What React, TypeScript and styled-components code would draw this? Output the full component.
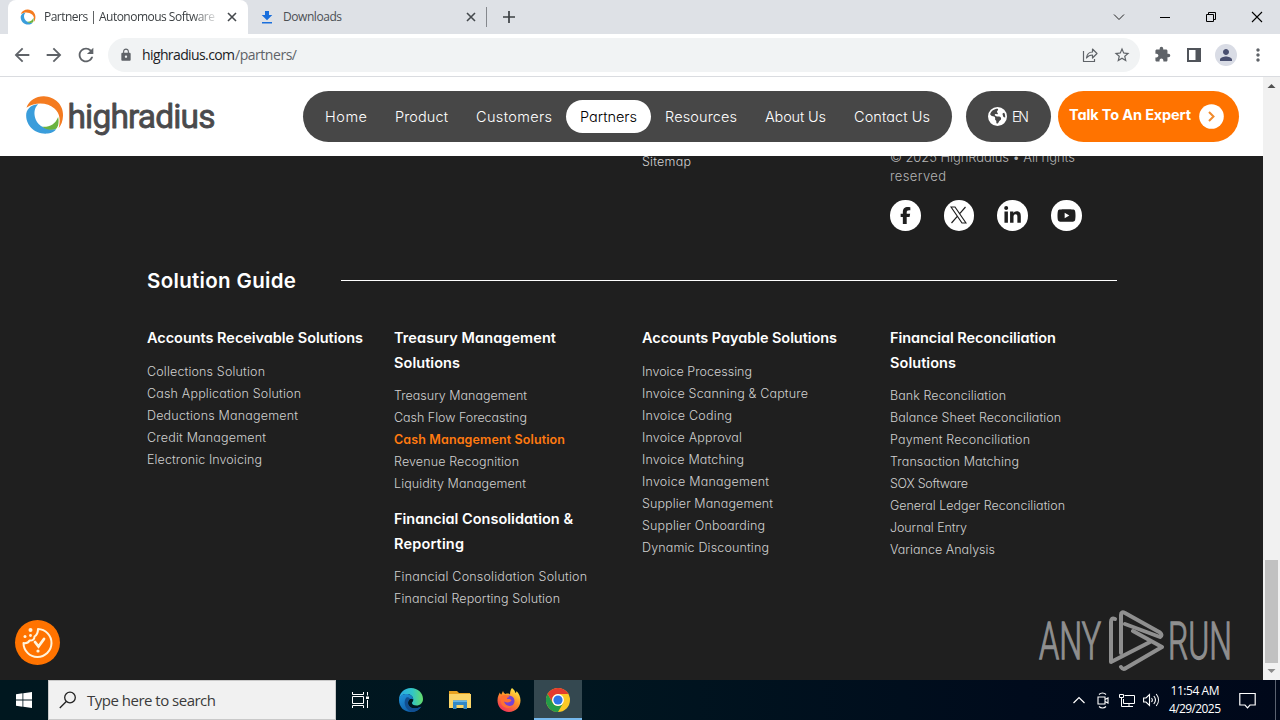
import React, { useLayoutEffect, useRef } from 'react';
import styled, { createGlobalStyle } from 'styled-components';
import { FaEarthAmericas, FaFacebookF, FaLinkedinIn, FaYoutube } from 'react-icons/fa6';
import {
  MdArrowBack,
  MdArrowForward,
  MdExtension,
  MdLock,
  MdMoreVert,
  MdPerson,
  MdRefresh,
  MdStarBorder,
} from 'react-icons/md';

const GlobalStyle = createGlobalStyle`
  * {
    box-sizing: border-box;
  }

  body {
    margin: 0;
    overflow: hidden;
  }

  ul {
    margin: 0;
    padding: 0;
    list-style: none;
  }

  svg {
    display: block;
    flex-shrink: 0;
  }
`;

const systemFont = `'Open Sans', 'Noto Sans', sans-serif`;
const brandFont = `Inter, 'Open Sans', sans-serif`;

const Tracked = styled.span`
  display: inline-block;
  white-space: pre;
`;

type FitProps = {
  width: number;
  children: string;
};

// spreads the letters of a label over the given width
const Fit = ({ width, children }: FitProps) => {
  const ref = useRef<HTMLSpanElement>(null);

  useLayoutEffect(() => {
    const el = ref.current;
    if (!el) return;
    el.style.letterSpacing = '0px';
    el.style.width = 'max-content';
    const natural = el.getBoundingClientRect().width;
    el.style.letterSpacing = `${(width - natural) / (children.length - 1)}px`;
    el.style.width = `${width}px`;
  }, [width, children]);

  return <Tracked ref={ref}>{children}</Tracked>;
};

const Screen = styled.div`
  width: 1280px;
  height: 720px;
  display: flex;
  flex-direction: column;
  overflow: hidden;
  font-family: ${systemFont};
  background: #fff;
`;

/* ---------- browser ---------- */

const TabStrip = styled.div`
  height: 34px;
  flex-shrink: 0;
  display: flex;
  align-items: center;
  padding-left: 8px;
  background: #dee1e6;
`;

const Tab = styled.div<{ $active?: boolean }>`
  width: ${({ $active }) => ($active ? 240 : 239)}px;
  height: 34px;
  display: flex;
  align-items: center;
  padding: 0 10px 0 ${({ $active }) => ($active ? 12 : 11)}px;
  border-radius: 8px 8px 0 0;
  font-size: 12px;
  color: ${({ $active }) => ($active ? '#3c4043' : '#4b4f54')};
  background: ${({ $active }) => ($active ? '#fff' : 'transparent')};
`;

const TabTitle = styled.div<{ $fade?: boolean }>`
  flex: 1;
  margin-left: 8px;
  overflow: hidden;
  line-height: 18px;
  mask-image: ${({ $fade }) => ($fade ? 'linear-gradient(90deg, #000 148px, transparent 176px)' : 'none')};
`;

const TabDivider = styled.div`
  width: 1px;
  height: 20px;
  margin: 0 14px 0 -1px;
  background: #85888d;
`;

const WindowButtons = styled.div`
  margin-left: auto;
  display: flex;

  > svg {
    width: 46px;
    height: 28px;
  }
`;

const Toolbar = styled.div`
  height: 43px;
  flex-shrink: 0;
  display: flex;
  align-items: center;
  padding: 0 12px 1px 11px;
  border-bottom: 1px solid #dadce0;
  color: #5f6368;
`;

const NavButtons = styled.div`
  width: 97px;
  display: flex;
  gap: 10px;
`;

const AddressBar = styled.div`
  width: 1032px;
  height: 34px;
  display: flex;
  align-items: center;
  padding: 0 9px 0 11px;
  border-radius: 17px;
  font-size: 14px;
  background: #f1f3f4;
`;

const Url = styled.div`
  display: flex;
  margin-left: 9px;
  line-height: 20px;
  color: #5f6368;

  > :first-child {
    color: #202124;
  }
`;

const AddressIcons = styled.div`
  margin-left: auto;
  display: flex;
  gap: 14px;
`;

const Extensions = styled.div`
  margin-left: auto;
  display: flex;
  align-items: center;
`;

const Avatar = styled.div`
  width: 22px;
  height: 22px;
  margin: 0 11px 0 14px;
  display: flex;
  align-items: center;
  justify-content: center;
  border-radius: 50%;
  color: #4a5070;
  background: #d9dce5;
`;

const PanelIcon = styled.svg`
  width: 14px;
  height: 14px;
  margin-left: 16px;
`;

const Viewport = styled.div`
  height: 603px;
  display: flex;
`;

const Page = styled.main`
  position: relative;
  width: 1263px;
  display: flex;
  flex-direction: column;
  font-family: ${brandFont};
  font-feature-settings: 'cv11' 1;
`;

const Scrollbar = styled.div`
  width: 17px;
  display: flex;
  flex-direction: column;
  align-items: center;
  background: #f1f1f1;
`;

const Thumb = styled.div`
  width: 13px;
  height: 103px;
  margin-top: auto;
  background: #c1c1c1;
`;

/* ---------- site header ---------- */

const SiteHeader = styled.header`
  height: 79px;
  flex-shrink: 0;
  display: flex;
  align-items: center;
  padding: 0 24px 1px 24px;
  background: #fff;
`;

const Menu = styled.nav`
  height: 51px;
  display: flex;
  align-items: center;
  margin-left: 83px;
  padding: 0 8px;
  border-radius: 26px;
  font-size: 14.5px;
  font-weight: 300;
  color: #fff;
  background: #474747;
`;

const MenuItem = styled.a<{ $active?: boolean }>`
  height: 33px;
  padding: 0 14px;
  line-height: 34px;
  border-radius: 17px;
  color: ${({ $active }) => ($active ? '#000' : '#fff')};
  background: ${({ $active }) => ($active ? '#fff' : 'transparent')};
`;

const Language = styled.div`
  width: 85px;
  height: 51px;
  display: flex;
  align-items: center;
  gap: 5px;
  margin-left: 14px;
  padding-left: 22px;
  border-radius: 26px;
  font-size: 14px;
  font-weight: 300;
  color: #fff;
  background: #474747;
`;

const TalkButton = styled.a`
  width: 181px;
  height: 51px;
  display: flex;
  align-items: center;
  gap: 8px;
  margin-left: 7px;
  padding-left: 11px;
  border-radius: 26px;
  font-size: 14.5px;
  font-weight: 700;
  color: #fff;
  background: #ff7300;

  > span {
    margin-bottom: 4px;
  }
`;

/* ---------- footer ---------- */

const Footer = styled.footer`
  flex: 1;
  overflow: hidden;
  padding-left: 147px;
  background: #1f1f1f;
`;

const Columns = styled.div`
  width: 991px;
  display: grid;
  grid-template-columns: 247px 248px 248px 248px;
`;

const LegalRow = styled(Columns)`
  height: 104px;
  margin-top: -8px;
  font-size: 13px;
  font-weight: 300;
  line-height: 19px;
  color: #b4b4b4;
`;

const Sitemap = styled.a`
  grid-column: 3;
  margin-top: 4px;
  font-size: 12.5px;
  color: #d2d2d2;
`;

const Legal = styled.div`
  display: flex;
  flex-direction: column;
`;

const Socials = styled.div`
  display: flex;
  gap: 23.2px;
  margin-top: 14px;
`;

const Social = styled.a`
  width: 30.5px;
  height: 30.5px;
  display: flex;
  align-items: center;
  justify-content: center;
  border-radius: 50%;
  color: #1f1f1f;
  background: #fff;
`;

const GuideHeading = styled.h2`
  height: 56px;
  margin: 0;
  display: flex;
  align-items: center;
  gap: 45px;
  font-size: 20.5px;
  font-weight: 600;
  color: #fff;

  &::after {
    content: '';
    width: 776px;
    height: 1px;
    background: #fff;
  }
`;

const GuideColumns = styled(Columns)`
  margin-top: 18px;
`;

const Group = styled.section`
  & + & {
    margin-top: 13px;
  }
`;

const GroupTitle = styled.h3`
  margin: 0 0 9px;
  display: flex;
  flex-direction: column;
  font-size: 14.5px;
  font-weight: 600;
  line-height: 24.5px;
  color: #fff;
`;

const GroupLink = styled.li<{ $active?: boolean }>`
  height: 22px;
  font-size: 12.5px;
  font-weight: ${({ $active }) => ($active ? 600 : 300)};
  line-height: 23px;
  color: ${({ $active }) => ($active ? '#ff7a10' : '#d0d0d0')};
`;

const CookieButton = styled.button`
  position: absolute;
  left: 15px;
  bottom: 15px;
  width: 45px;
  height: 45px;
  padding: 0;
  border: 0;
  border-radius: 50%;
  background: #ff7300;
`;

const Watermark = styled.div`
  position: absolute;
  right: 31px;
  bottom: 8px;
`;

/* ---------- taskbar ---------- */

const Taskbar = styled.div`
  height: 40px;
  display: flex;
  align-items: center;
  background: linear-gradient(90deg, #00171f 0%, #001620 45%, #000b1c 80%, #00081a 100%);
`;

const TaskButton = styled.div<{ $active?: boolean; $narrow?: boolean }>`
  width: ${({ $narrow }) => ($narrow ? 40 : 48)}px;
  height: 40px;
  display: flex;
  align-items: center;
  justify-content: center;
  border-bottom: ${({ $active }) => ($active ? '2px solid #76b9ed' : '0')};
  padding-top: ${({ $active }) => ($active ? '2px' : '0')};
  background: ${({ $active }) => ($active ? '#344850' : 'transparent')};
`;

const SearchBox = styled.div`
  width: 288px;
  height: 40px;
  display: flex;
  align-items: center;
  gap: 10px;
  padding-left: 10px;
  border: 1px solid #c9c9c9;
  font-size: 15px;
  color: #3b3b3b;
  background: #f1f1f1;
`;

const Apps = styled.div`
  display: flex;
  gap: 1px;

  > :first-child {
    margin-right: 2px;
  }
`;

const Tray = styled.div`
  margin-left: auto;
  display: flex;
  align-items: center;
  height: 40px;
`;

const TrayIcon = styled.div`
  width: 24px;
  display: flex;
  justify-content: center;
`;

const Clock = styled.div`
  width: 64px;
  display: flex;
  flex-direction: column;
  align-items: center;
  font-size: 12px;
  line-height: 18px;
  color: #fff;
`;

const DesktopEdge = styled.div`
  width: 5px;
  height: 40px;
  margin-left: 8px;
  border-left: 1px solid #5b6270;
`;

type LinkItem = [label: string, width: number, active?: boolean];

type GroupData = {
  title: LinkItem[];
  links: LinkItem[];
};

const menu: LinkItem[] = [
  ['Home', 42],
  ['Product', 53],
  ['Customers', 76],
  ['Partners', 57, true],
  ['Resources', 72],
  ['About Us', 61],
  ['Contact Us', 76],
];

const guide: GroupData[][] = [
  [
    {
      title: [['Accounts Receivable Solutions', 216]],
      links: [
        ['Collections Solution', 118],
        ['Cash Application Solution', 154],
        ['Deductions Management', 151],
        ['Credit Management', 119],
        ['Electronic Invoicing', 115],
      ],
    },
  ],
  [
    {
      title: [
        ['Treasury Management', 162],
        ['Solutions', 66],
      ],
      links: [
        ['Treasury Management', 133],
        ['Cash Flow Forecasting', 133],
        ['Cash Management Solution', 171, true],
        ['Revenue Recognition', 125],
        ['Liquidity Management', 132],
      ],
    },
    {
      title: [
        ['Financial Consolidation &', 179],
        ['Reporting', 70],
      ],
      links: [
        ['Financial Consolidation Solution', 193],
        ['Financial Reporting Solution', 166],
      ],
    },
  ],
  [
    {
      title: [['Accounts Payable Solutions', 195]],
      links: [
        ['Invoice Processing', 110],
        ['Invoice Scanning & Capture', 166],
        ['Invoice Coding', 90],
        ['Invoice Approval', 100],
        ['Invoice Matching', 102],
        ['Invoice Management', 127],
        ['Supplier Management', 131],
        ['Supplier Onboarding', 123],
        ['Dynamic Discounting', 127],
      ],
    },
  ],
  [
    {
      title: [
        ['Financial Reconciliation', 166],
        ['Solutions', 66],
      ],
      links: [
        ['Bank Reconciliation', 116],
        ['Balance Sheet Reconciliation', 171],
        ['Payment Reconciliation', 140],
        ['Transaction Matching', 129],
        ['SOX Software', 78],
        ['General Ledger Reconciliation', 175],
        ['Journal Entry', 77],
        ['Variance Analysis', 105],
      ],
    },
  ],
];

const Swirl = ({ size }: { size: number }) => (
  <svg width={size} height={size} viewBox='0 0 41 41'>
    <path d='M2 13C5 5 12 1 20 1.200C31 1.500 40 10 39.500 21C39.300 27 37.500 31 35 34C37 26 36.500 19 31 14C24 8 12 6.500 2 13Z' fill='#f47b20' />
    <path d='M14 9.500C8 10 3 13 1.800 19C.5 31 11 41 24 39.500C28 39 31 37 32.500 35C24 36 15 33 11.500 25C9.200 19 10 13 14 9.500Z' fill='#3a9ddb' />
    <path d='M18 32.500C26 33 31.500 30 34.500 22.500C35.500 27 35 32 32.500 34.700C27 36.500 22 35.500 18 32.500Z' fill='#6cb33f' />
  </svg>
);

const BrandLogo = () => (
  <svg width='196' height='50' viewBox='0 -1 196 50'>
    <svg x='0.500' y='3' width='40' height='41'>
      <Swirl size={40} />
    </svg>
    <text
      x='43.500'
      y='35.500'
      textLength='148'
      lengthAdjust='spacing'
      fontFamily='Roboto, sans-serif'
      fontSize='33.500'
      fill='#4a4a4c'
      stroke='#4a4a4c'
      strokeWidth='.8'
      strokeLinejoin='round'
    >
      highradius
    </text>
  </svg>
);

const CloseIcon = () => (
  <svg width='12' height='12' viewBox='0 0 12 12' stroke='#45494d' strokeWidth='1.600'>
    <path d='M2 2l8 8M10 2l-8 8' />
  </svg>
);

const AnyRunLogo = () => (
  <svg width='194' height='62' viewBox='0 0 194 62' fill='none'>
    <g
      fontFamily='Roboto, sans-serif'
      fontSize='51'
      fontWeight='300'
      fill='#8f8f8f'
      stroke='#8f8f8f'
      strokeWidth='1.300'
    >
      <text x='1' y='49' textLength='62' lengthAdjust='spacingAndGlyphs'>
        ANY
      </text>
      <text x='130' y='49' textLength='64' lengthAdjust='spacingAndGlyphs'>
        RUN
      </text>
    </g>
    <g stroke='#8f8f8f' strokeWidth='4' strokeLinejoin='round' strokeLinecap='round'>
      <path d='M77 9Q73 7 73 12V52L112 32' />
      <path d='M83 43V5Q83 1 87 3L122 22.500Q125 25 122 27L87 14' />
      <path d='M95 21L124 37L88 58Q85 60 83 57' />
    </g>
  </svg>
);

const CookieIcon = () => (
  <svg width='45' height='45' viewBox='0 0 45 45' fill='none' stroke='#fff4dc' strokeWidth='2'>
    <path d='M23 9a14 14 0 1 1-14.500 14c3 .5 5-.5 6-2.500 3 .5 5-1 5-4 2.500-1.500 3.500-4 3.500-7.500Z' strokeLinejoin='round' />
    <path d='M20 22l3.500 4.500 5.500-7.500' strokeWidth='2.800' strokeLinecap='round' />
    <g fill='#fff4dc' stroke='none'>
      <circle cx='15.500' cy='10' r='2' />
      <circle cx='10' cy='16.500' r='1.500' />
      <circle cx='15.500' cy='15.500' r='1.400' />
      <circle cx='23' cy='31' r='1.600' />
    </g>
  </svg>
);

const EdgeIcon = () => (
  <svg width='26' height='26' viewBox='0 0 26 26'>
    <defs>
      <linearGradient id='edgeTop' x1='0' y1='.4' x2='1' y2='.4'>
        <stop offset='0' stopColor='#2ba9e5' />
        <stop offset='.55' stopColor='#31c5c8' />
        <stop offset='1' stopColor='#65dd69' />
      </linearGradient>
      <linearGradient id='edgeLow' x1='0' y1='0' x2='.7' y2='1'>
        <stop offset='0' stopColor='#2195dc' />
        <stop offset='1' stopColor='#0c59a4' />
      </linearGradient>
    </defs>
    <path d='M1 13C1 6 6 1 13 1s12 5 12 11c0 4-3 6.500-6.500 6.500-3 0-4.500-1.200-4.500-2.500 0-1 1.300-1.300 1.300-3.200C15.300 9 12 7 8.500 7 4 7 1.500 10 1 13Z' fill='url(#edgeTop)' />
    <path d='M1 13c0-4 3.500-6 7.500-6 4 0 6.800 2.500 6.800 5.500-2-1.700-5.300-.5-5.300 3.500 0 4.500 5 7 13 4-2.200 3-5.500 5-10 5C6 25 1 20 1 13Z' fill='url(#edgeLow)' />
    <path d='M8.500 10.500c-3 3-3 11 5 14.400C18 25 21 23 23.500 19.500 17 23 10 21 10 15.700c0-2 .8-3.200 2-4-1-1.200-2.200-1.600-3.500-1.200Z' fill='#114f91' />
  </svg>
);

const ExplorerIcon = () => (
  <svg width='22' height='20' viewBox='0 0 22 20'>
    <path d='M0 1h8l2 2h11v3H0Z' fill='#e8a320' />
    <path d='M0 4h22v14H0Z' fill='#fbd568' />
    <path d='M4 10.500h14V19h-3.500v-4h-7v4H4Z' fill='#3288c6' />
    <path d='M4 10.500h14v1.500H4Z' fill='#64b5ea' />
  </svg>
);

const FirefoxIcon = () => (
  <svg width='24' height='24' viewBox='0 0 24 24'>
    <defs>
      <linearGradient id='foxBody' x1='.8' y1='0' x2='.2' y2='1'>
        <stop offset='0' stopColor='#fff14a' />
        <stop offset='.45' stopColor='#ff9226' />
        <stop offset='1' stopColor='#f0285e' />
      </linearGradient>
    </defs>
    <path d='M15 0c2 1.500 3 3 3.300 5 1-.5 1.200-1 1.200-2 2.500 2.300 4 6 4 9.500C23.500 19 18.500 24 12 24S.5 19 .5 12.500c0-4 1.500-6 2.300-8 .5 1 .7 1.700 1.500 2L6 3c.5 1.500 1.300 2.500 2.500 3 2-1 4-.2 4.500.5 0-2.500.5-5 2-6.500Z' fill='url(#foxBody)' />
    <circle cx='12' cy='13' r='5.500' fill='#7542d4' />
    <path d='M4 8c4-2 7-1 8.500 1-1.500.2-2.500.7-2.500 2 2 0 4-.2 4.500 1.800C13 14 11 15.500 7 13.500c1 4 5 5.500 9 3.500-2 4-8 4-11 0-1.500-2.500-1.500-6-1-9Z' fill='#ff7032' />
  </svg>
);

const ChromeIcon = () => (
  <svg width='24' height='24' viewBox='0 0 24 24'>
    <circle cx='12' cy='12' r='12' fill='#fbc926' />
    <path d='M1.600 6A12 12 0 0 1 22.400 6H12a6 6 0 0 0-5.200 9Z' fill='#e33b2e' />
    <path d='M1.600 6a12 12 0 0 0 10.400 18l5.200-9A6 6 0 0 1 6.800 15Z' fill='#249b48' />
    <circle cx='12' cy='12' r='5.900' fill='#fff' />
    <circle cx='12' cy='12' r='4.600' fill='#2c75e5' />
  </svg>
);

const BrowserTabs = () => (
  <TabStrip>
    <Tab $active>
      <Swirl size={16} />
      <TabTitle $fade>
        <Fit width={171}>Partners | Autonomous Software</Fit>
      </TabTitle>
      <CloseIcon />
    </Tab>
    <Tab>
      <svg width='16' height='16' viewBox='0 0 16 16' fill='#1a6fdc'>
        <path d='M6 2h4v4h3.300L8 11.300 2.700 6H6ZM3 13h10v1.500H3Z' />
      </svg>
      <TabTitle>
        <Fit width={59}>Downloads</Fit>
      </TabTitle>
      <CloseIcon />
    </Tab>
    <TabDivider />
    <svg width='16' height='14' viewBox='0 0 16 14' stroke='#3c4043' strokeWidth='1.700'>
      <path d='M8 1v12M2 7h12' />
    </svg>
    <WindowButtons>
      <svg viewBox='0 0 46 28' fill='none' stroke='#222'>
        <path d='M18 11.500l5 5 5-5' />
      </svg>
      <svg viewBox='0 0 46 28' stroke='#000'>
        <path d='M18 14.500h10' />
      </svg>
      <svg viewBox='0 0 46 28' fill='none' stroke='#000'>
        <path d='M18.500 11.500h7v7h-7ZM20.500 11.500v-2h7v7h-2' />
      </svg>
      <svg viewBox='0 0 46 28' stroke='#000' strokeWidth='1.100'>
        <path d='M18 9l10 10M28 9L18 19' />
      </svg>
    </WindowButtons>
  </TabStrip>
);

const BrowserToolbar = () => (
  <Toolbar>
    <NavButtons>
      <MdArrowBack size={22} />
      <MdArrowForward size={22} />
      <MdRefresh size={22} />
    </NavButtons>
    <AddressBar>
      <MdLock size={14} />
      <Url>
        <Fit width={93}>highradius.com</Fit>
        <Fit width={62}>/partners/</Fit>
      </Url>
      <AddressIcons>
        <svg width='18' height='18' viewBox='0 0 18 18' fill='none' stroke='#5f6368' strokeWidth='1.200'>
          <path d='M2.500 5v10.500h11V13M5.500 12c.5-4 2.500-6 6-6V3l4.500 4.500-4.500 4.500V9c-3 0-4.500 1-6 3Z' strokeLinejoin='round' />
        </svg>
        <MdStarBorder size={18} />
      </AddressIcons>
    </AddressBar>
    <Extensions>
      <MdExtension size={17} />
      <PanelIcon viewBox='0 0 14 14'>
        <path d='M0 0h14v14H0ZM2 2v10h6.500V2Z' fill='#50545a' fillRule='evenodd' />
      </PanelIcon>
      <Avatar>
        <MdPerson size={18} />
      </Avatar>
      <MdMoreVert size={20} />
    </Extensions>
  </Toolbar>
);

const Header = () => (
  <SiteHeader>
    <BrandLogo />
    <Menu>
      {menu.map(([label, width, active]) => (
        <MenuItem key={label} $active={active}>
          <Fit width={width}>{label}</Fit>
        </MenuItem>
      ))}
    </Menu>
    <Language>
      <FaEarthAmericas size={19} />
      <Fit width={17}>EN</Fit>
    </Language>
    <TalkButton>
      <Fit width={122}>Talk To An Expert</Fit>
      <svg width='25' height='25' viewBox='0 0 25 25' fill='none'>
        <circle cx='12.500' cy='12.500' r='12.300' fill='#fff' />
        <path d='M10 8l4.500 4.500L10 17' stroke='#f08a2c' strokeWidth='2' />
      </svg>
    </TalkButton>
  </SiteHeader>
);

const SiteFooter = () => (
  <Footer>
    <LegalRow>
      <Sitemap>
        <Fit width={49}>Sitemap</Fit>
      </Sitemap>
      <Legal>
        <Fit width={185}>© 2025 HighRadius • All rights</Fit>
        <Fit width={56}>reserved</Fit>
        <Socials>
          <Social>
            <FaFacebookF size={17} />
          </Social>
          <Social>
            <svg width='17' height='18' viewBox='0 0 17 18' fill='none' stroke='#1f1f1f' strokeWidth='1.200'>
              <path d='M1 1h4l11 16h-4ZM15.500 1L9.500 7.800M7.500 10.200L1.500 17' />
            </svg>
          </Social>
          <Social>
            <FaLinkedinIn size={19} />
          </Social>
          <Social>
            <FaYoutube size={19} />
          </Social>
        </Socials>
      </Legal>
    </LegalRow>
    <GuideHeading>
      <Fit width={149}>Solution Guide</Fit>
    </GuideHeading>
    <GuideColumns>
      {guide.map((groups, i) => (
        <div key={i}>
          {groups.map(({ title, links }) => (
            <Group key={title[0][0]}>
              <GroupTitle>
                {title.map(([line, width]) => (
                  <Fit key={line} width={width}>
                    {line}
                  </Fit>
                ))}
              </GroupTitle>
              <ul>
                {links.map(([label, width, active]) => (
                  <GroupLink key={label} $active={active}>
                    <Fit width={width}>{label}</Fit>
                  </GroupLink>
                ))}
              </ul>
            </Group>
          ))}
        </div>
      ))}
    </GuideColumns>
  </Footer>
);

const WindowsTaskbar = () => (
  <Taskbar>
    <TaskButton>
      <svg width='16' height='16' viewBox='0 0 16 16' fill='#fff'>
        <path d='M0 2.200l6.500-.9v6.200H0ZM7.300 1.200L16 0v7.500H7.300ZM0 8.400h6.500v6.300L0 13.800ZM7.300 8.400H16V16l-8.700-1.200Z' />
      </svg>
    </TaskButton>
    <SearchBox>
      <svg width='18' height='18' viewBox='0 0 18 18' fill='none' stroke='#222' strokeWidth='1.300'>
        <circle cx='11' cy='6.500' r='5.300' />
        <path d='M7.300 10.500L.8 17' />
      </svg>
      <Fit width={129}>Type here to search</Fit>
    </SearchBox>
    <Apps>
      <TaskButton>
        <svg width='17' height='16' viewBox='0 0 17 16' fill='none' stroke='#fff'>
          <path d='M.5 0v2.500h11V0M.5 16v-2.500h11V16M.5 4.500h11v7H.5ZM15.500 0v3.500M15.500 8v8' />
          <path d='M14 4.500h3v2.500h-3Z' fill='#fff' stroke='none' />
        </svg>
      </TaskButton>
      <TaskButton>
        <EdgeIcon />
      </TaskButton>
      <TaskButton>
        <ExplorerIcon />
      </TaskButton>
      <TaskButton>
        <FirefoxIcon />
      </TaskButton>
      <TaskButton $active>
        <ChromeIcon />
      </TaskButton>
    </Apps>
    <Tray>
      <TrayIcon>
        <svg width='12' height='8' viewBox='0 0 12 8' fill='none' stroke='#fff' strokeWidth='1.200'>
          <path d='M.5 7L6 1.500 11.500 7' />
        </svg>
      </TrayIcon>
      <TrayIcon>
        <svg width='12' height='17' viewBox='0 0 12 17' fill='none' stroke='#fff' strokeWidth='1.100'>
          <path d='M1 5h7v7H1ZM8 7.500l3-1.500v5L8 9.500M2 2.500C4 .5 7 .5 9 2.500M2 14.500c2 2 5 2 7 0' />
        </svg>
      </TrayIcon>
      <TrayIcon>
        <svg width='17' height='15' viewBox='0 0 17 15' fill='none' stroke='#fff'>
          <path d='M5.500 2.500h10v8h-11V6M10 10.500v3M6 13.500h8M.5 1.500h4v3h-4ZM2.500 4.500v9h4' />
        </svg>
      </TrayIcon>
      <TrayIcon>
        <svg width='17' height='14' viewBox='0 0 17 14' fill='none' stroke='#fff' strokeWidth='1.100'>
          <path d='M.6 5h2.400l3.500-3.500v11L3 9H.6ZM8.500 5c1 1.200 1 2.800 0 4M10.800 3c2 2.400 2 5.600 0 8M13.200 1c3 3.600 3 8.400 0 12' />
        </svg>
      </TrayIcon>
      <Clock>
        <Fit width={49}>11:54 AM</Fit>
        <Fit width={52}>4/29/2025</Fit>
      </Clock>
      <TaskButton $narrow>
        <svg width='17' height='17' viewBox='0 0 17 17' fill='none' stroke='#fff' strokeWidth='1.200'>
          <path d='M.8 1.500h15.400v11.500H11l-2.500 2.800L6 13H.8Z' />
        </svg>
      </TaskButton>
      <DesktopEdge />
    </Tray>
  </Taskbar>
);

const App = () => {
  return (
    <Screen>
      <GlobalStyle />
      <BrowserTabs />
      <BrowserToolbar />
      <Viewport>
        <Page>
          <Header />
          <SiteFooter />
          <CookieButton>
            <CookieIcon />
          </CookieButton>
          <Watermark>
            <AnyRunLogo />
          </Watermark>
        </Page>
        <Scrollbar>
          <svg width='17' height='17' viewBox='0 0 17 17' fill='#505050'>
            <path d='M4.500 11L8.500 7l4 4Z' />
          </svg>
          <Thumb />
          <svg width='17' height='17' viewBox='0 0 17 17' fill='#8a8a8a'>
            <path d='M4.500 6l4 4 4-4Z' />
          </svg>
        </Scrollbar>
      </Viewport>
      <WindowsTaskbar />
    </Screen>
  );
};

export default App;
